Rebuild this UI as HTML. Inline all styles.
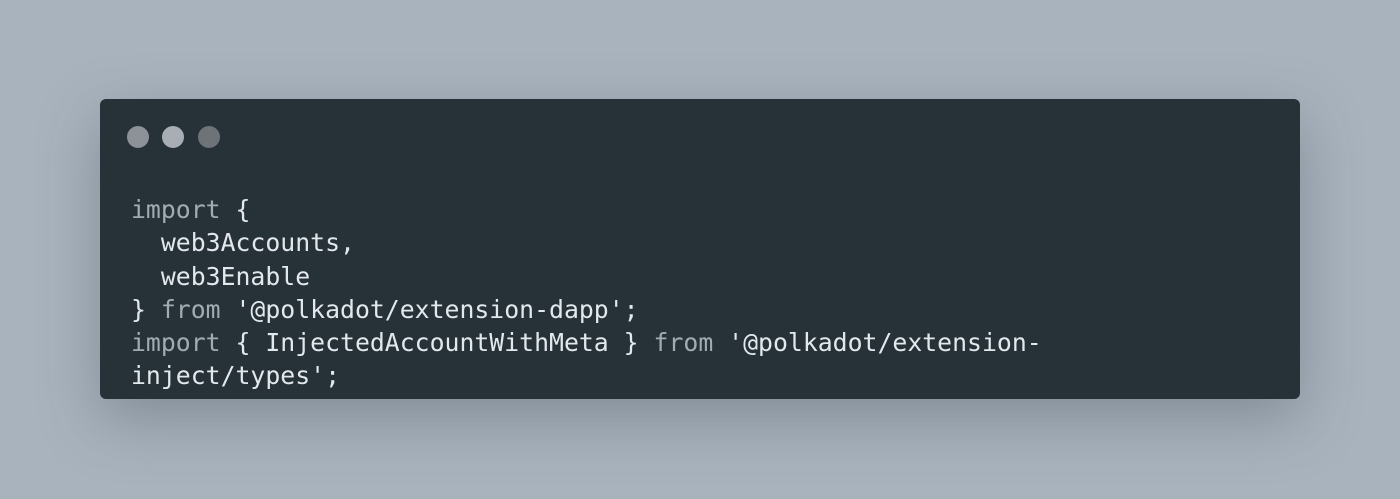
<!DOCTYPE html>
<html><head><style>
html,body{margin:0;padding:0}
body{width:1400px;height:499px;background:#a8b3bd;position:relative;overflow:hidden}
.card{position:absolute;left:100px;top:99px;width:1200px;height:300px;background:#263238;border-radius:6px;box-shadow:0 20px 60px rgba(60,70,80,0.35)}
.dot{position:absolute;top:126px;width:22px;height:22px;border-radius:50%}
pre{position:absolute;left:131px;top:193px;margin:0;font-family:"DejaVu Sans Mono","Liberation Mono",monospace;font-size:24.8px;line-height:33.3px;color:#e3e8ec}
.k{color:#a3abb2}
</style></head><body>
<div class="card"></div>
<div class="dot" style="left:127px;background:#8c9298"></div>
<div class="dot" style="left:162px;background:#a8aeb3"></div>
<div class="dot" style="left:198px;background:#6e7378"></div>
<pre><span class="k">import</span> {
  web3Accounts,
  web3Enable
} <span class="k">from</span> '@polkadot/extension-dapp';
<span class="k">import</span> { InjectedAccountWithMeta } <span class="k">from</span> '@polkadot/extension-
inject/types';</pre>
</body></html>
